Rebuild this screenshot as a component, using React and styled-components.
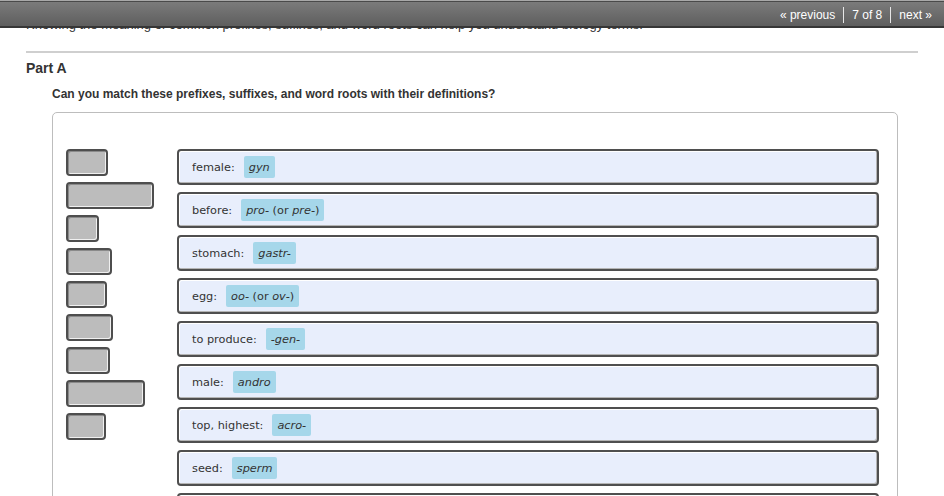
import React from 'react';
import styled, { createGlobalStyle } from 'styled-components';

const GlobalStyle = createGlobalStyle`
  html, body {
    margin: 0;
    padding: 0;
    overflow: hidden;
    background: #fff;
    font-family: "Liberation Sans", Arial, sans-serif;
    color: #333;
  }
`;

const leftBoxes = [42, 88, 33, 46, 41, 47, 44, 79, 40];

const rows = [
  { label: 'female:', term: [{ t: 'gyn', i: true }] },
  {
    label: 'before:',
    term: [
      { t: 'pro-', i: true },
      { t: ' (or ', i: false },
      { t: 'pre-', i: true },
      { t: ')', i: false },
    ],
  },
  { label: 'stomach:', term: [{ t: 'gastr-', i: true }] },
  {
    label: 'egg:',
    term: [
      { t: 'oo-', i: true },
      { t: ' (or ', i: false },
      { t: 'ov-', i: true },
      { t: ')', i: false },
    ],
  },
  { label: 'to produce:', term: [{ t: '-gen-', i: true }] },
  { label: 'male:', term: [{ t: 'andro', i: true }] },
  { label: 'top, highest:', term: [{ t: 'acro-', i: true }] },
  { label: 'seed:', term: [{ t: 'sperm', i: true }] },
  // last row only shows its top edge in the frame
  { label: '', term: [] },
];

export default function App() {
  return (
    <>
      <GlobalStyle />
      <TopBar>
        <Pager>
          <PagerLink>« previous</PagerLink>
          <PagerSep />
          <PagerCount>7 of 8</PagerCount>
          <PagerSep />
          <PagerLink>next »</PagerLink>
        </Pager>
      </TopBar>
      <Main>
        <Intro>
          Knowing the meaning of common prefixes, suffixes, and word roots can
          help you understand biology terms.
        </Intro>
        <Divider />
        <PartTitle>Part A</PartTitle>
        <Question>
          <QuestionText>
            Can you match these prefixes, suffixes, and word roots with their
            definitions?
          </QuestionText>
          <MatchPanel>
            <TokenColumn>
              {leftBoxes.map((w, idx) => (
                <Token key={idx} style={{ width: w }} />
              ))}
            </TokenColumn>
            <TargetColumn>
              {rows.map((r, idx) => (
                <Target key={idx}>
                  {r.label && <TargetLabel>{r.label}</TargetLabel>}
                  {r.term.length > 0 && (
                    <Term>
                      {r.term.map((p, k) =>
                        p.i ? <em key={k}>{p.t}</em> : <span key={k}>{p.t}</span>,
                      )}
                    </Term>
                  )}
                </Target>
              ))}
            </TargetColumn>
          </MatchPanel>
        </Question>
      </Main>
    </>
  );
}

const TopBar = styled.div`
  position: fixed;
  top: 0;
  left: 0;
  right: 0;
  height: 25px;
  z-index: 10;
  display: flex;
  align-items: center;
  justify-content: flex-end;
  padding-right: 12px;
  background: linear-gradient(#7c7c7c, #5e5e5e);
  border-top: 1px solid #a8a8a8;
  box-shadow: inset 0 1px 0 #4a4a4a;
  border-bottom: 2px solid #363636;
`;

const Pager = styled.div`
  display: flex;
  align-items: center;
  gap: 8px;
  color: #fff;
  font-size: 12px;
  padding-top: 2px;
`;

const PagerLink = styled.span`
  color: #fff;
`;

const PagerCount = styled.span`
  color: #fff;
`;

const PagerSep = styled.span`
  width: 1px;
  height: 16px;
  background: #e6e6e6;
`;

const Main = styled.div`
  padding: 0 26px;
`;

const Intro = styled.p`
  margin: 0;
  padding-top: 17px;
  font-size: 13px;
  line-height: 16px;
  color: #333;
`;

const Divider = styled.div`
  margin-top: 18px;
  height: 2px;
  background: #cfcfcf;
`;

const PartTitle = styled.h2`
  margin: 7px 0 0;
  font-size: 14px;
  line-height: 17px;
  font-weight: bold;
  color: #333;
`;

const Question = styled.div`
  padding-left: 26px;
`;

const QuestionText = styled.p`
  margin: 10px 0 0;
  font-size: 12px;
  line-height: 15px;
  font-weight: bold;
  color: #333;
`;

const MatchPanel = styled.div`
  margin-top: 10px;
  width: 846px;
  box-sizing: border-box;
  border: 1px solid #bdbdbd;
  border-radius: 5px;
  padding: 36px 18px 20px 13px;
  display: flex;
`;

const TokenColumn = styled.div`
  width: 111px;
  flex: none;
  display: flex;
  flex-direction: column;
  align-items: flex-start;
  gap: 6px;
`;

const Token = styled.div`
  height: 27px;
  box-sizing: border-box;
  background: #bcbcbc;
  border: 2px solid #4e4e4e;
  border-radius: 4px;
  box-shadow: inset -1px -1px 0 #f0f0f0, inset 1px 1px 0 #8a8a8a;
`;

const TargetColumn = styled.div`
  flex: 1;
  display: flex;
  flex-direction: column;
  gap: 7px;
`;

const Target = styled.div`
  height: 36px;
  box-sizing: border-box;
  display: flex;
  align-items: center;
  padding-left: 13px;
  background: #e8eefc;
  border: 2px solid #4f4f4f;
  border-radius: 4px;
  box-shadow: inset -1px -1px 0 #b4b4b4, inset 1px 1px 0 #ffffff;
  font-family: "DejaVu Sans", Verdana, sans-serif;
  font-size: 11.3px;
  color: #333;
`;

const TargetLabel = styled.span`
  margin-right: 9px;
`;

const Term = styled.span`
  height: 22px;
  display: inline-flex;
  align-items: center;
  white-space: pre;
  padding: 0 5px;
  background: #a6d7ea;
  border-radius: 2px;

  em {
    font-style: italic;
  }
`;
